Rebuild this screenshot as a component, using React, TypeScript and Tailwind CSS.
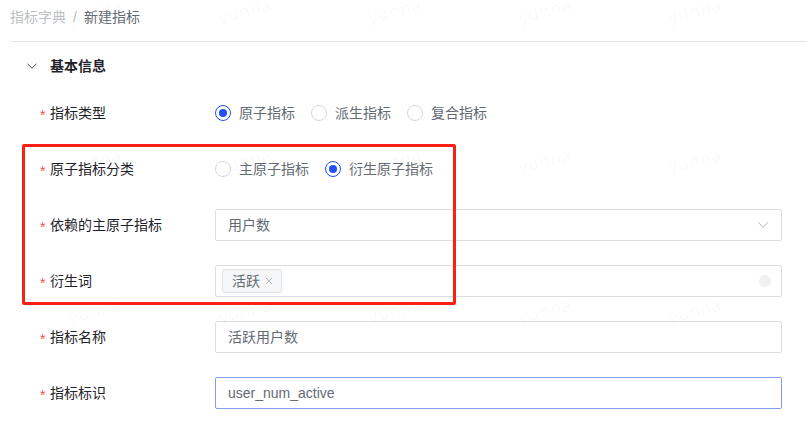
import React from 'react';

const font = { fontFamily: '"Liberation Sans", "Noto Sans CJK SC", sans-serif' };

interface RadioProps {
  label: string;
  checked?: boolean;
}

function Radio({ label, checked = false }: RadioProps) {
  return (
    <label className="flex items-center mr-[16px]">
      <span
        className={`flex items-center justify-center w-[16px] h-[16px] rounded-full border ${
          checked ? 'border-[#2350f5]' : 'border-[#d5d7db]'
        } bg-white`}
      >
        {checked && <span className="w-[8px] h-[8px] rounded-full bg-[#2350f5]" />}
      </span>
      <span className="ml-[8px] text-[14px] text-[#646a73]">{label}</span>
    </label>
  );
}

function FormRow({ label, children }: { label: string; children: React.ReactNode }) {
  return (
    <div className="flex items-center h-[56px]">
      <div className="w-[215px] pl-[40px] flex items-center text-[14px] text-[#1f2329]">
        <span className="text-[#f54a45] w-[10px] text-[14px] leading-none pt-[3px]">*</span>
        <span>{label}</span>
      </div>
      <div className="flex-1 mr-[25px] flex items-center">{children}</div>
    </div>
  );
}

const boxClasses =
  'w-full h-[32px] rounded-[2px] border bg-white flex items-center text-[14px] text-[#646a73]';

function Watermark() {
  const cells = Array.from({ length: 15 });
  return (
    <div className="absolute left-[68px] top-[-10px] grid grid-cols-[repeat(5,150px)] auto-rows-[150px] pointer-events-none">
      {cells.map((_, i) => (
        <div key={i} className="relative">
          <span
            className="absolute left-0 top-[8px] text-[17px] text-[#000000]/[0.035] -rotate-[14deg] tracking-[1px]"
            style={{ fontFamily: '"Open Sans", sans-serif' }}
          >
            yunna
          </span>
        </div>
      ))}
    </div>
  );
}

export default function App() {
  return (
    <div className="relative w-[807px] h-[426px] overflow-hidden bg-white" style={font}>
      {/* breadcrumb */}
      <div className="ml-[10px] h-[42px] border-b border-[#e5e6eb]">
        <div className="h-[35px] flex items-center text-[14px]">
          <span className="text-[#bbbfc4]">指标字典</span>
          <span className="mx-[7px] text-[#bbbfc4]">/</span>
          <span className="text-[#646a73]">新建指标</span>
        </div>
      </div>

      {/* section header */}
      <div className="mt-[12px] h-[24px] flex items-center pl-[26px]">
        <svg width="12" height="12" viewBox="0 0 12 12" fill="none" className="mr-[12px]">
          <path d="M1.8 4.2 L6 8.2 L10.2 4.2" stroke="#3d4350" strokeWidth="1" strokeLinecap="round" strokeLinejoin="round" />
        </svg>
        <span className="text-[14px] font-bold text-[#1f2329]">基本信息</span>
      </div>

      <div className="mt-[7px]">
        <FormRow label="指标类型">
          <Radio label="原子指标" checked />
          <Radio label="派生指标" />
          <Radio label="复合指标" />
        </FormRow>

        <FormRow label="原子指标分类">
          <Radio label="主原子指标" />
          <Radio label="衍生原子指标" checked />
        </FormRow>

        <FormRow label="依赖的主原子指标">
          <div className={`${boxClasses} border-[#dcdee2] px-[12px] justify-between`}>
            <span>用户数</span>
            <svg width="12" height="12" viewBox="0 0 12 12" fill="none">
              <path d="M1.5 3.5 L6 8.5 L10.5 3.5" stroke="#b5b9c0" strokeWidth="1" strokeLinecap="round" strokeLinejoin="round" />
            </svg>
          </div>
        </FormRow>

        <FormRow label="衍生词">
          <div className={`${boxClasses} border-[#dcdee2] pl-[6px] pr-[10px] justify-between`}>
            <span className="h-[24px] flex items-center pl-[9px] pr-[8px] rounded-[2px] border border-[#e4e5e7] bg-[#f5f6f7] text-[14px] text-[#646a73]">
              活跃
              <svg width="8" height="8" viewBox="0 0 8 8" className="ml-[5px]">
                <path d="M1 1 L7 7 M7 1 L1 7" stroke="#b5b9c0" strokeWidth="1" />
              </svg>
            </span>
            <span className="w-[12px] h-[12px] rounded-full bg-[#f0f1f2]" />
          </div>
        </FormRow>

        <FormRow label="指标名称">
          <div className={`${boxClasses} border-[#dcdee2] px-[12px]`}>
            <span>活跃用户数</span>
          </div>
        </FormRow>

        <FormRow label="指标标识">
          <div className={`${boxClasses} border-[#7f9cf0] px-[12px]`}>
            <span>user_num_active</span>
          </div>
        </FormRow>
      </div>

      {/* annotation box */}
      <div className="absolute left-[22px] top-[144px] w-[434px] h-[161px] border-[3px] border-[#fa2016] rounded-[2px] pointer-events-none" />

      <Watermark />
    </div>
  );
}
